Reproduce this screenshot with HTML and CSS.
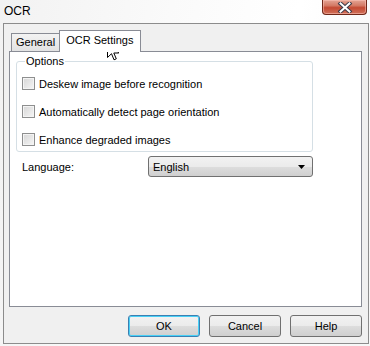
FILE: index.html
```html
<!DOCTYPE html>
<html>
<head>
<link rel="stylesheet" href="styles.css">
<title>OCR</title>
</head>
<body>
  <div class="titlebar">
    <span class="titulo">OCR</span>
    <div class="boton-cerrar">
      <svg width="16" height="11" viewBox="0 0 16 11">
        <path d="M3.5 1.5 L12.5 9.5 M12.5 1.5 L3.5 9.5" stroke="#3a3a4a" stroke-width="4" stroke-linecap="square"/>
        <path d="M3.5 1.5 L12.5 9.5 M12.5 1.5 L3.5 9.5" stroke="#ffffff" stroke-width="2" stroke-linecap="square"/>
      </svg>
    </div>
  </div>
  <div class="ventana">
    <div class="pestanas">
      <div class="pestana">General</div>
      <div class="pestana activa">OCR Settings</div>
    </div>
    <div class="panel">
      <fieldset class="grupo">
        <legend>Options</legend>
        <div class="fila-check"><span class="check"></span>Deskew image before recognition</div>
        <div class="fila-check"><span class="check"></span>Automatically detect page orientation</div>
        <div class="fila-check"><span class="check"></span>Enhance degraded images</div>
      </fieldset>
      <div class="fila-idioma">
        <span class="etiqueta">Language:</span>
        <div class="combo">
          <span>English</span>
          <svg width="7" height="4" viewBox="0 0 7 4"><path d="M0 0 H7 L3.5 4 Z" fill="#000"/></svg>
        </div>
      </div>
    </div>
    <div class="botones">
      <div class="boton defecto">OK</div>
      <div class="boton">Cancel</div>
      <div class="boton">Help</div>
    </div>
  </div>
  <svg class="cursor" width="13" height="21" viewBox="0 0 13 21">
    <path d="M0.5 0.5 V16.5 L4.5 12.7 L7 18.8 L9.3 17.8 L6.8 12 L11.8 12 Z" fill="#fff" stroke="#000" stroke-width="1" stroke-linejoin="miter"/>
  </svg>
</body>
</html>
```

FILE: styles.css
```css
* {
  box-sizing: border-box;
}

body {
  margin: 0;
  width: 370px;
  height: 346px;
  background: linear-gradient(100deg, #f2f2f2 0%, #fafafa 40%, #ffffff 70%, #f6f6f6 100%);
  font-family: "Liberation Sans", Arial, sans-serif;
  font-size: 11px;
  color: #000;
  position: relative;
  overflow: hidden;
}

.titlebar {
  height: 23px;
  display: flex;
  justify-content: space-between;
  align-items: flex-start;
}

.titulo {
  margin: 4px 0 0 4px;
  font-size: 12px;
}

.boton-cerrar {
  width: 45px;
  height: 15px;
  margin-right: 3px;
  border: 1px solid #6e2718;
  border-top: none;
  border-radius: 0 0 4px 4px;
  background: linear-gradient(#e4a595 0%, #d47a65 40%, #c44a33 55%, #d0715a 100%);
  box-shadow: inset 0 0 0 1px rgba(255, 200, 190, 0.5);
  display: flex;
  justify-content: center;
  align-items: center;
}

.ventana {
  margin-left: 3px;
  width: 366px;
  height: 321px;
  border: 1px solid #8c8c8c;
  background: #f0f0f0;
  padding: 0 6px 0 5px;
}

.pestanas {
  display: flex;
  align-items: flex-end;
  height: 27px;
  padding-left: 2px;
}

.pestana {
  height: 18px;
  padding: 0 4px;
  line-height: 17px;
  border: 1px solid #898c95;
  border-bottom: none;
  background: linear-gradient(#f3f3f3, #e2e2e2);
}

.pestana.activa {
  height: 22px;
  line-height: 19px;
  padding: 0 7px 0 6px;
  background: #ffffff;
  margin-left: -1px;
  margin-bottom: -1px;
  position: relative;
  z-index: 1;
}

.panel {
  height: 256px;
  border: 1px solid #898c95;
  background: #ffffff;
  padding: 0 0 0 6px;
}

.grupo {
  width: 297px;
  height: 97px;
  margin: 3px 0 0 0;
  padding: 0 0 0 5px;
  border: 1px solid #d5dfe5;
  border-radius: 3px;
}

.grupo legend {
  padding: 0 1px;
  margin-left: 3px;
  line-height: 12px;
}

.fila-check {
  display: flex;
  align-items: center;
  height: 13px;
  margin-top: 15px;
  gap: 4px;
}

.fila-check:first-of-type {
  margin-top: 10px;
}

.check {
  width: 13px;
  height: 13px;
  border: 1px solid #8e8f8f;
  background: linear-gradient(135deg, #d6d6d6, #f6f6f6);
  box-shadow: inset 0 0 0 1px #f4f4f4;
}

.fila-idioma {
  display: flex;
  align-items: center;
  margin-top: 4px;
  padding-left: 6px;
}

.etiqueta {
  width: 126px;
}

.combo {
  width: 165px;
  height: 21px;
  border: 1px solid #707070;
  border-radius: 3px;
  background: linear-gradient(#f2f2f2 0%, #ebebeb 50%, #dddddd 51%, #cfcfcf 100%);
  display: flex;
  justify-content: space-between;
  align-items: center;
  padding: 0 7px 0 4px;
}

.botones {
  display: flex;
  justify-content: flex-end;
  gap: 9px;
  margin-top: 8px;
}

.boton {
  width: 72px;
  height: 22px;
  border: 1px solid #707070;
  border-radius: 3px;
  background: linear-gradient(#f2f2f2 0%, #ebebeb 50%, #dddddd 51%, #cfcfcf 100%);
  text-align: center;
  line-height: 20px;
}

.boton.defecto {
  border-color: #3c7fb1;
  box-shadow: inset 0 0 0 1px #48d0f6;
}

.cursor {
  position: absolute;
  left: 107px;
  top: 41px;
}
```
